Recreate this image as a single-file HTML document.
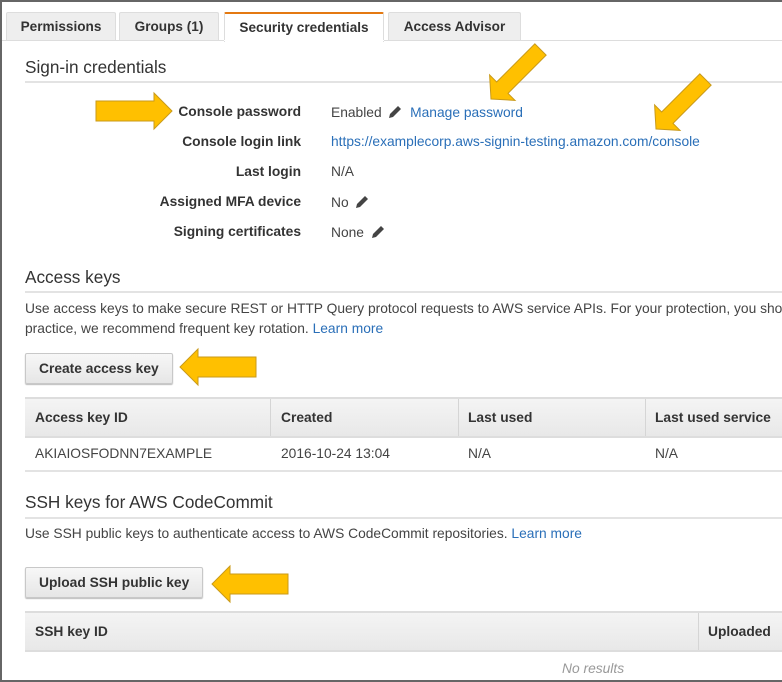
<!DOCTYPE html>
<html><head><style>
*{margin:0;padding:0;box-sizing:border-box}
body{width:782px;height:682px;background:#fff;font-family:"Liberation Sans",Arial,sans-serif;font-size:13.8px;color:#444;position:relative;overflow:hidden}
.frame{position:absolute;left:0;top:0;width:784px;height:682px;border:2px solid #666;border-right:none}
.a{position:absolute;white-space:nowrap}
.tab{position:absolute;top:12px;height:29px;background:#eee;border:1px solid #ddd;border-bottom:none;font-weight:bold;font-size:13.6px;color:#333;text-align:center;line-height:27px;border-radius:2px 2px 0 0}
.lbl{position:absolute;right:481px;font-weight:bold;color:#333;white-space:nowrap}
.val{position:absolute;left:331px;white-space:nowrap;color:#444}
a{color:#2a6fb8;text-decoration:none}
h2{position:absolute;left:25px;font-weight:normal;font-size:17.2px;color:#333;white-space:nowrap}
.hr{position:absolute;left:25px;right:0;height:2px;background:#e3e3e3}
.btn{position:absolute;left:25px;height:31px;border:1px solid #c8c8c8;border-radius:2px;background:linear-gradient(#f7f7f7,#e6e6e6);font-weight:bold;color:#333;line-height:29px;padding:0 13px;box-shadow:0 1px 1px #bbb;white-space:nowrap}
.th{position:absolute;height:41px;background:linear-gradient(#f4f4f4,#e8e8e8);border-top:2px solid #ddd;border-bottom:2px solid #ddd;font-weight:bold;color:#333;line-height:37px;padding-left:10px;white-space:nowrap}
.vd{position:absolute;width:1px;height:37px;background:#d5d5d5}
.td{position:absolute;line-height:16px;white-space:nowrap}
.pen{display:inline-block;vertical-align:-2px;margin-left:3px}
</style></head><body>
<div class="tab" style="left:6px;width:110px">Permissions</div>
<div class="tab" style="left:119px;width:100px">Groups (1)</div>
<div class="tab" style="left:224px;width:160px;background:#fff;border-top:2px solid #e47911;height:30px">Security credentials</div>
<div class="tab" style="left:388px;width:133px">Access Advisor</div>
<div class="a" style="left:0;right:0;top:40px;height:1px;background:#ddd"></div>
<div class="a" style="left:224px;width:160px;top:40px;height:1px;background:#fff"></div>

<h2 style="top:57px">Sign-in credentials</h2>
<div class="hr" style="top:81px"></div>

<div class="lbl" style="top:104px">Console password</div>
<div class="val" style="top:104px">Enabled <svg class="pen" width="14" height="15" viewBox="0 0 14 15"><path d="M1 14 L2 10 L10 2 L13 5 L5 13 Z" fill="#444"/></svg>&nbsp;&nbsp;<a>Manage password</a></div>
<div class="lbl" style="top:134px">Console login link</div>
<div class="val" style="top:134px"><a>https://examplecorp.aws-signin-testing.amazon.com/console</a></div>
<div class="lbl" style="top:164px">Last login</div>
<div class="val" style="top:164px">N/A</div>
<div class="lbl" style="top:194px">Assigned MFA device</div>
<div class="val" style="top:194px">No <svg class="pen" width="14" height="15" viewBox="0 0 14 15"><path d="M1 14 L2 10 L10 2 L13 5 L5 13 Z" fill="#444"/></svg></div>
<div class="lbl" style="top:224px">Signing certificates</div>
<div class="val" style="top:224px">None <svg class="pen" width="14" height="15" viewBox="0 0 14 15"><path d="M1 14 L2 10 L10 2 L13 5 L5 13 Z" fill="#444"/></svg></div>

<h2 style="top:267px">Access keys</h2>
<div class="hr" style="top:291px"></div>
<div class="a" style="left:25px;top:299px;line-height:20px">Use access keys to make secure REST or HTTP Query protocol requests to AWS service APIs. For your protection, you should<br>practice, we recommend frequent key rotation. <a>Learn more</a></div>
<div class="btn" style="top:353px">Create access key</div>

<div class="th" style="left:25px;top:397px;width:760px">Access key ID</div>
<div class="td" style="left:281px;top:410px;font-weight:bold;color:#333">Created</div>
<div class="td" style="left:468px;top:410px;font-weight:bold;color:#333">Last used</div>
<div class="td" style="left:655px;top:410px;font-weight:bold;color:#333">Last used service</div>
<div class="vd" style="left:270px;top:399px"></div>
<div class="vd" style="left:458px;top:399px"></div>
<div class="vd" style="left:645px;top:399px"></div>
<div class="td" style="left:35px;top:446px">AKIAIOSFODNN7EXAMPLE</div>
<div class="td" style="left:281px;top:446px">2016-10-24 13:04</div>
<div class="td" style="left:468px;top:446px">N/A</div>
<div class="td" style="left:655px;top:446px">N/A</div>
<div class="a" style="left:25px;right:0;top:470px;height:2px;background:#e3e3e3"></div>

<h2 style="top:492px">SSH keys for AWS CodeCommit</h2>
<div class="hr" style="top:517px"></div>
<div class="a" style="left:25px;top:525px;line-height:18px">Use SSH public keys to authenticate access to AWS CodeCommit repositories. <a>Learn more</a></div>
<div class="btn" style="top:567px">Upload SSH public key</div>

<div class="th" style="left:25px;top:611px;width:760px">SSH key ID</div>
<div class="td" style="left:708px;top:624px;font-weight:bold;color:#333">Uploaded</div>
<div class="vd" style="left:698px;top:613px"></div>
<div class="td" style="left:562px;top:661px;font-style:italic;color:#999">No results</div>

<svg class="a" style="left:0;top:0" width="782" height="682">
<defs><polygon id="ar" points="0,0 -18,-18 -18,-10 -76,-10 -76,10 -18,10 -18,18" fill="#FFC000" stroke="#C99A1A" stroke-width="1"/>
<polygon id="ad" points="0,0 -16,-18 -16,-8 -70,-8 -70,8 -16,8 -16,18" fill="#FFC000" stroke="#C99A1A" stroke-width="1"/></defs>
<use href="#ar" transform="translate(172,111)"/>
<use href="#ar" transform="translate(180,367) rotate(180)"/>
<use href="#ar" transform="translate(212,584) rotate(180)"/>
<use href="#ad" transform="translate(491,99) rotate(135)"/>
<use href="#ad" transform="translate(656,129) rotate(135)"/>
</svg>
<div class="frame"></div>
</body></html>
